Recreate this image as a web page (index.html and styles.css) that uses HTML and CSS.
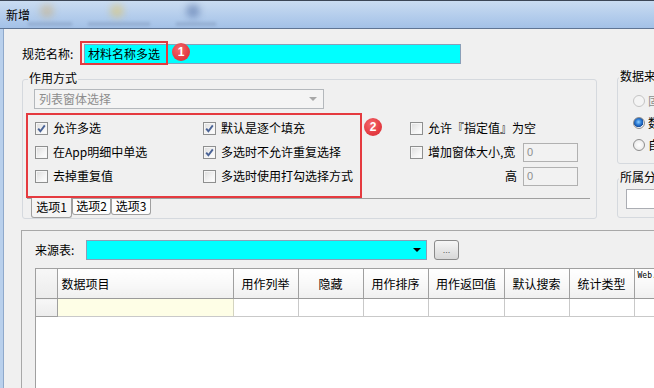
FILE: index.html
```html
<!DOCTYPE html>
<html lang="zh-CN">
<head>
    <meta charset="UTF-8">
    <title>新增</title>
    <link rel="stylesheet" href="styles.css">
</head>
<body>
<div class="window">
    <div class="titlebar">
        <span class="title">新增</span>
        <!-- 透过玻璃标题栏看到的工具栏 -->
        <span class="ghost ghost-1"></span>
        <span class="ghost ghost-2"></span>
        <span class="ghost ghost-3"></span>
        <span class="ghost-text gt-1"></span>
        <span class="ghost-text gt-2"></span>
        <span class="ghost-text gt-3"></span>
    </div>
    <div class="frame">
        <div class="name-row">
            <label class="name-label">规范名称:</label>
            <div class="name-input">
                <span class="name-text">材料名称多选</span>
                <span class="mark mark-1"></span>
                <span class="badge badge-1">1</span>
            </div>
        </div>

        <div class="mid-row">
            <div class="group usage">
                <span class="caption">作用方式</span>
                <div class="combo combo-disabled">
                    <span>列表窗体选择</span>
                    <i class="arrow"></i>
                </div>
                <div class="tabs">
                    <div class="tab-page">
                        <div class="options">
                            <div class="opt"><span class="check on"></span>允许多选</div>
                            <div class="opt"><span class="check on"></span>默认是逐个填充</div>
                            <div class="opt"><span class="check"></span>允许『指定值』为空</div>

                            <div class="opt"><span class="check"></span>在App明细中单选</div>
                            <div class="opt"><span class="check on"></span>多选时不允许重复选择</div>
                            <div class="opt"><span class="check"></span>增加窗体大小,宽<span class="num">0</span></div>

                            <div class="opt"><span class="check"></span>去掉重复值</div>
                            <div class="opt"><span class="check"></span>多选时使用打勾选择方式</div>
                            <div class="opt opt-right">高<span class="num">0</span></div>
                        </div>
                        <span class="mark mark-2"></span>
                        <span class="badge badge-2">2</span>
                    </div>
                    <div class="tab-strip">
                        <span class="tab active">选项1</span>
                        <span class="tab tab-2">选项2</span>
                        <span class="tab tab-3">选项3</span>
                    </div>
                </div>
            </div>

            <div class="side">
                <div class="group source">
                    <span class="caption">数据来源</span>
                    <div class="radio-row off"><span class="radio disabled"></span>固定值</div>
                    <div class="radio-row"><span class="radio on"></span>数据表</div>
                    <div class="radio-row"><span class="radio"></span>自定义</div>
                </div>
                <div class="group category">
                    <span class="caption">所属分类</span>
                    <div class="cat-input"></div>
                </div>
            </div>
        </div>

        <div class="lower">
            <div class="source-row">
                <label class="source-label">来源表:</label>
                <div class="combo combo-cyan"><i class="arrow"></i></div>
                <button class="more">...</button>
            </div>
            <div class="grid">
                <table>
                    <colgroup>
                        <col style="width:21px">
                        <col style="width:176px">
                        <col style="width:65px">
                        <col style="width:65px">
                        <col style="width:65px">
                        <col style="width:76px">
                        <col style="width:65px">
                        <col style="width:65px">
                        <col style="width:60px">
                    </colgroup>
                    <thead>
                        <tr>
                            <th class="rh"></th>
                            <th class="left">数据项目</th>
                            <th>用作列举</th>
                            <th>隐藏</th>
                            <th>用作排序</th>
                            <th>用作返回值</th>
                            <th>默认搜索</th>
                            <th>统计类型</th>
                            <th class="tiny">Web.</th>
                        </tr>
                    </thead>
                    <tbody>
                        <tr>
                            <td class="rh"></td>
                            <td class="current"></td>
                            <td></td>
                            <td></td>
                            <td></td>
                            <td></td>
                            <td></td>
                            <td></td>
                            <td></td>
                        </tr>
                    </tbody>
                </table>
            </div>
        </div>
    </div>
</div>
</body>
</html>
```

FILE: styles.css
```css
html, body {
    margin: 0;
    padding: 0;
    background: #f0f0f0;
}
body {
    font-family: 'Noto Sans CJK SC', 'Noto Sans', sans-serif;
    font-size: 12px;
    line-height: 16px;
    color: #000;
}
.window {
    width: 654px;
    height: 388px;
    overflow: hidden;
    position: relative;
}

/* 标题栏 */
.titlebar {
    position: relative;
    height: 27px;
    border-top: 1px solid #3c4656;
    border-bottom: 1px solid #5f7594;
    background: linear-gradient(180deg, #cadcf1 0%, #b4cdec 55%, #a3c1e7 100%);
    overflow: hidden;
}
.title {
    position: absolute;
    left: 6px;
    top: 6px;
    line-height: 16px;
}
.ghost {
    position: absolute;
    top: 3px;
    width: 14px;
    height: 14px;
    border-radius: 50%;
    filter: blur(3.5px);
}
.ghost-1 { left: 40px; background: rgba(205, 170, 110, 0.45); }
.ghost-2 { left: 110px; background: rgba(225, 195, 95, 0.5); }
.ghost-3 { left: 186px; background: rgba(60, 90, 150, 0.45); }
.ghost-text {
    position: absolute;
    top: 21px;
    height: 4px;
    background: rgba(95, 115, 150, 0.25);
    filter: blur(1.5px);
}
.gt-1 { left: 28px; width: 44px; }
.gt-2 { left: 88px; width: 62px; }
.gt-3 { left: 176px; width: 40px; }

/* 窗体 */
.frame {
    height: 360px;
    border-left: 3px solid #b9d0ec;
    box-shadow: inset 1px 0 0 #8fa9cb;
    padding-left: 1px;
    background: #f0f0f0;
}
.name-row {
    display: flex;
    align-items: center;
    padding: 15px 0 0 18px;
}
.name-label {
    width: 62px;
}
.name-input {
    position: relative;
    width: 377px;
    height: 20px;
    box-sizing: border-box;
    border: 1px solid #8a9fb8;
    background: #00ffff;
    padding-left: 3px;
    line-height: 18px;
}
.mark {
    position: absolute;
    border: 2px solid #e53a3f;
    box-sizing: border-box;
}
.mark-1 {
    left: -5px;
    top: -4px;
    width: 88px;
    height: 24px;
}
.badge {
    position: absolute;
    width: 18px;
    height: 18px;
    border-radius: 50%;
    background: radial-gradient(circle at 40% 35%, #f46a6e 0%, #e43c43 60%, #d8333a 100%);
    color: #fff;
    font-family: 'Liberation Sans', Arial, sans-serif;
    font-size: 12px;
    font-weight: bold;
    line-height: 18px;
    text-align: center;
}
.badge-1 {
    left: 87px;
    top: -2px;
}

.mid-row {
    display: flex;
    align-items: flex-start;
    margin-top: 15px;
}
.group {
    position: relative;
    box-sizing: border-box;
    border: 1px solid #d5d9de;
    border-radius: 3px;
}
.caption {
    position: absolute;
    left: 5px;
    top: -10px;
    background: #f0f0f0;
    padding: 0 1px;
    line-height: 16px;
    white-space: nowrap;
}
.usage {
    flex: none;
    margin-left: 18px;
    width: 575px;
    height: 140px;
    padding-top: 9px;
}

.combo {
    position: relative;
    box-sizing: border-box;
    height: 20px;
    line-height: 18px;
}
.combo-disabled {
    margin-left: 11px;
    width: 290px;
    border: 1px solid #b4b8bc;
    background: #f4f4f4;
    color: #8d8d8d;
    padding-left: 4px;
}
.arrow {
    position: absolute;
    right: 6px;
    top: 7px;
    width: 0;
    height: 0;
    border-left: 4px solid transparent;
    border-right: 4px solid transparent;
    border-top: 4px solid #a8a8a8;
}

.tabs {
    margin: 4px 0 0 4px;
}
.tab-page {
    position: relative;
    width: 563px;
    height: 86px;
    box-sizing: border-box;
    border-bottom: 1px solid #a0a0a0;
    padding: 3px 0 0 8px;
}
.options {
    display: grid;
    grid-template-columns: 168px 207px 168px;
    grid-auto-rows: 24px;
}
.opt {
    display: flex;
    align-items: center;
    white-space: nowrap;
}
.opt-right {
    justify-content: flex-end;
}
.check {
    width: 13px;
    height: 13px;
    box-sizing: border-box;
    border: 1px solid #8e8f8f;
    background: linear-gradient(135deg, #dcdcdc 0%, #f4f4f4 60%, #fff 100%);
    box-shadow: inset 0 0 0 1px #f6f6f6;
    margin-right: 5px;
    flex: none;
}
.check.on {
    background-image: url("data:image/svg+xml,%3Csvg xmlns='http://www.w3.org/2000/svg' width='11' height='11'%3E%3Cpath d='M2.2 5.6 L4.4 8.2 L8.8 2.4' fill='none' stroke='%234a6396' stroke-width='1.9'/%3E%3C/svg%3E"),
        linear-gradient(135deg, #dcdcdc 0%, #f4f4f4 60%, #fff 100%);
    background-repeat: no-repeat;
}
.num {
    box-sizing: border-box;
    width: 55px;
    height: 19px;
    margin-left: auto;
    border: 1px solid #b1b1b1;
    background: #f2f2f2;
    color: #8d8d8d;
    padding-left: 3px;
    line-height: 17px;
    font-family: 'Liberation Sans', Arial, sans-serif;
    font-size: 11px;
}
.opt-right .num {
    margin-left: 6px;
}
.mark-2 {
    left: -1px;
    top: 0;
    width: 336px;
    height: 85px;
}
.badge-2 {
    left: 337px;
    top: 5px;
}

.tab-strip {
    display: flex;
    align-items: flex-start;
    margin-left: 4px;
}
.tab {
    box-sizing: border-box;
    height: 16px;
    border: 1px solid #a0a0a0;
    border-top: none;
    border-radius: 0 0 3px 3px;
    background: #fdfdfd;
    text-align: center;
    line-height: 14px;
}
.tab.active {
    width: 41px;
    height: 20px;
    margin-top: -1px;
    background: #f4f4f4;
    line-height: 18px;
    position: relative;
}
.tab-2 { width: 39px; }
.tab-3 { width: 40px; }

/* 右侧 */
.side {
    flex: none;
    margin-left: 20px;
    margin-top: -2px;
}
.side .caption {
    left: 1px;
}
.source {
    width: 60px;
    height: 87px;
    padding: 12px 0 0 15px;
}
.radio-row {
    display: flex;
    align-items: center;
    height: 22px;
    white-space: nowrap;
}
.radio-row.off {
    color: #8d8d8d;
}
.radio {
    width: 12px;
    height: 12px;
    box-sizing: border-box;
    border-radius: 50%;
    border: 1px solid #8d8d8d;
    background: radial-gradient(circle at 50% 50%, #fff 0%, #e4e4e4 100%);
    margin-right: 3px;
    flex: none;
}
.radio.disabled {
    border-color: #c4c4c4;
    background: #f4f4f4;
}
.radio.on {
    background: radial-gradient(circle at 45% 40%, #8fd0ff 0%, #2b7bd6 35%, #164e9c 60%, #e9eef5 62%, #fff 100%);
}
.category {
    width: 60px;
    height: 40px;
    margin-top: 14px;
    padding: 10px 0 0 8px;
}
.cat-input {
    height: 20px;
    box-sizing: border-box;
    border: 1px solid #abadb3;
    background: #fff;
}

/* 下方来源表 */
.lower {
    margin: 11px 0 0 17px;
    border-top: 1px solid #a8a8a8;
    border-left: 1px solid #a8a8a8;
    padding: 9px 0 0 13px;
}
.source-row {
    display: flex;
    align-items: center;
}
.source-label {
    width: 51px;
}
.combo-cyan {
    width: 341px;
    border: 1px solid #8a9fb8;
    background: #00ffff;
}
.combo-cyan .arrow {
    right: 5px;
    border-top-color: #000;
}
.more {
    margin-left: 7px;
    width: 25px;
    height: 20px;
    box-sizing: border-box;
    border: 1px solid #8a8a8a;
    border-radius: 3px;
    background: linear-gradient(180deg, #f6f6f6 0%, #e6e6e6 50%, #d8d8d8 100%);
    font-family: 'Liberation Sans', Arial, sans-serif;
    font-size: 9px;
    color: #555;
    padding: 0;
    line-height: 18px;
}

.grid {
    margin-top: 8px;
    height: 130px;
    background: #fff;
    border-top: 1px solid #a0a0a0;
    border-left: 1px solid #a0a0a0;
    overflow: hidden;
}
.grid table {
    width: 658px;
    table-layout: fixed;
    border-collapse: collapse;
}
.grid th {
    height: 27px;
    padding: 0;
    font-weight: normal;
    text-align: center;
    border-right: 1px solid #a0a0a0;
    border-bottom: 1px solid #9a9a9a;
    background: linear-gradient(180deg, #ffffff 0%, #f7f7f7 60%, #efefef 100%);
    white-space: nowrap;
    overflow: hidden;
}
.grid th.left {
    text-align: left;
    padding-left: 4px;
}
.grid th.tiny {
    vertical-align: top;
    text-align: left;
    padding: 2px 0 0 3px;
    font-family: 'DejaVu Sans Mono', monospace;
    font-size: 8px;
    line-height: 10px;
}
.grid .rh {
    background: linear-gradient(180deg, #f7f7f7 0%, #ececec 100%);
}
.grid td {
    height: 17px;
    padding: 0;
    border-right: 1px solid #c9c9c9;
    border-bottom: 1px solid #c9c9c9;
}
.grid td.rh {
    border-right-color: #a0a0a0;
    border-bottom-color: #a0a0a0;
}
.grid td.current {
    background: #fefee6;
    border-right-color: #d4d4c0;
}
```
